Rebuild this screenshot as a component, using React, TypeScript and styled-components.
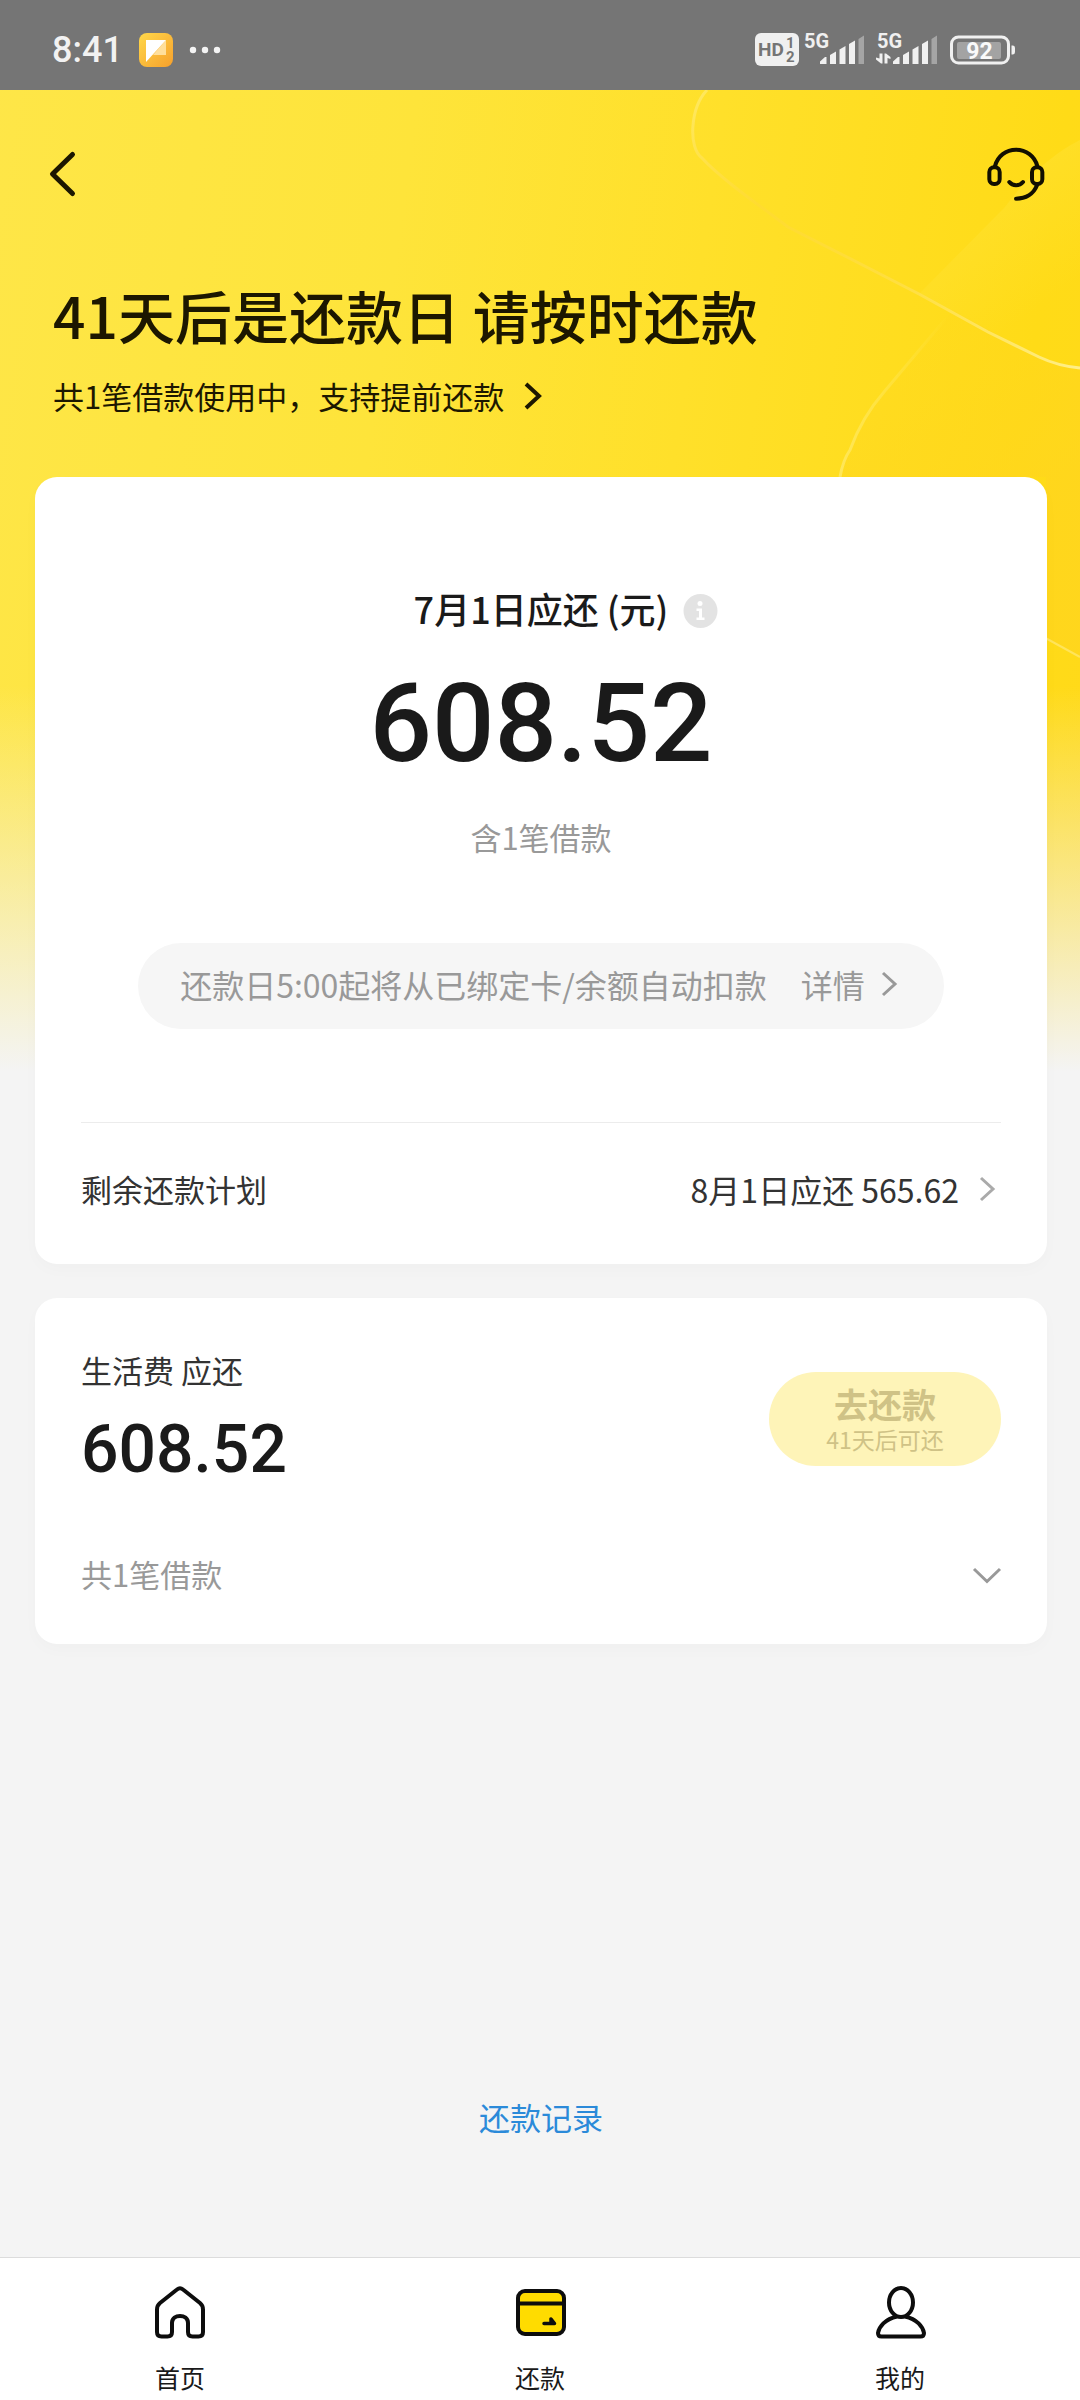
import React from "react";
import styled, { createGlobalStyle } from "styled-components";

const GlobalStyle = createGlobalStyle`
  *, *::before, *::after { box-sizing: border-box; }
  body {
    margin: 0;
    background: #f4f4f4;
    color: #1a1a1a;
    font-family: "Noto Sans CJK SC", "Noto Sans", sans-serif;
    font-size: 31px;
    line-height: 44px;
  }
  h1, h2, p { margin: 0; font-weight: 400; }
  button {
    margin: 0;
    padding: 0;
    border: 0;
    background: none;
    color: inherit;
    font: inherit;
    cursor: pointer;
  }
  a { color: inherit; text-decoration: none; }
  svg { display: block; flex: none; overflow: visible; }
`;

const Page = styled.div`
  position: relative;
  isolation: isolate;
  min-height: 100vh;
  display: flex;
  flex-direction: column;
`;

const Backdrop = styled.div`
  position: absolute;
  inset: 0 0 auto;
  z-index: -1;
  height: 1072px;
  overflow: hidden;
  background:
    linear-gradient(180deg, rgba(244, 244, 244, 0) 64%, #f4f4f4 100%),
    linear-gradient(98deg, #fee648 0%, #fee43a 35%, #ffe02a 60%, #ffdb17 88%, #ffd91a 100%);
`;

const Ribbons = styled.svg`
  position: absolute;
  top: 90px;
  right: 0;
`;

const StatusBar = styled.div`
  display: flex;
  align-items: center;
  justify-content: space-between;
  height: 90px;
  padding: 10px 64px 0 52px;
  background: #757575;
  color: #f2f2f2;
`;

const StatusGroup = styled.div<{ $gap: number }>`
  display: flex;
  align-items: center;
  gap: ${(p) => p.$gap}px;
`;

const Clock = styled.span`
  font-family: Roboto, "Noto Sans CJK SC", sans-serif;
  font-size: 36px;
  font-weight: 500;
`;

const TopBar = styled.header`
  display: flex;
  align-items: center;
  justify-content: space-between;
  height: 168px;
  padding: 0 35px 0 49px;
`;

const Intro = styled.section`
  display: flex;
  flex-direction: column;
  align-items: flex-start;
  gap: 20px;
  padding: 16px 53px 59px;
  color: #1c1700;
`;

const Title = styled.h1`
  font-size: 57px;
  font-weight: 500;
  line-height: 80px;
`;

const PrepayLink = styled.a`
  display: flex;
  align-items: center;
  gap: 20px;
`;

const Main = styled.main`
  flex: 1;
  display: flex;
  flex-direction: column;
  gap: 34px;
  padding: 0 33px 118px 35px;
`;

const Card = styled.section`
  display: flex;
  flex-direction: column;
  border-radius: 22px;
  background: #fff;
  box-shadow: 0 6px 16px rgba(0, 0, 0, 0.02);
`;

const DueCard = styled(Card)`
  padding: 105px 46px 10px;
`;

const LoanCard = styled(Card)`
  padding: 50px 46px 48px;
`;

const DueHeading = styled.div`
  display: grid;
  grid-template-columns: 1fr auto 1fr;
  align-items: center;
  column-gap: 16px;
`;

const DueLabel = styled.h2`
  grid-column: 2;
  font-size: 36px;
  font-weight: 500;
  line-height: 52px;
`;

const Amount = styled.p<{ $size: number; $line: number }>`
  font-family: Roboto, "Noto Sans CJK SC", sans-serif;
  font-size: ${(p) => p.$size}px;
  font-weight: 500;
  line-height: ${(p) => p.$line}px;
`;

const DueBody = styled.div`
  display: flex;
  flex-direction: column;
  align-items: center;
  padding: 34px 0 93px;
`;

const Muted = styled.p`
  color: #999;
`;

const DueNote = styled(Muted)`
  margin: 35px 0 84px;
`;

const Notice = styled.a`
  display: flex;
  align-items: center;
  height: 86px;
  padding: 0 46px 4px 42px;
  border-radius: 43px;
  background: #f6f6f6;
  color: #999;
  font-size: 32px;
`;

const NoticeMore = styled.span`
  display: flex;
  align-items: center;
  gap: 16px;
  margin-left: 34px;
`;

const PlanRow = styled.a`
  display: flex;
  align-items: center;
  justify-content: space-between;
  height: 132px;
  border-top: 1px solid #ececec;
  color: #333;
`;

const PlanValue = styled.span`
  display: flex;
  align-items: center;
  gap: 20px;
  padding-right: 5px;
  font-size: 32px;
`;

const LoanTop = styled.div`
  display: flex;
  align-items: center;
  justify-content: space-between;
`;

const LoanInfo = styled.div`
  display: flex;
  flex-direction: column;
  gap: 18px;
  color: #1a1a1a;
`;

const LoanName = styled.h2`
  color: #333;
  font-size: 31px;
  line-height: 44px;
`;

const RepayButton = styled.button`
  display: flex;
  flex-direction: column;
  align-items: center;
  justify-content: center;
  width: 232px;
  height: 94px;
  border-radius: 47px;
  background: #fef4b8;
  color: #cfc286;
  cursor: default;
`;

const RepayText = styled.span`
  font-size: 34px;
  font-weight: 700;
  line-height: 40px;
`;

const RepayHint = styled.span`
  font-size: 23px;
  line-height: 30px;
`;

const LoanToggle = styled.button`
  display: flex;
  align-items: center;
  justify-content: space-between;
  margin-top: 62px;
  color: #999;
`;

const RecordLink = styled.a`
  align-self: center;
  margin-top: auto;
  color: #2b8ad9;
`;

const TabBar = styled.nav`
  display: grid;
  grid-template-columns: repeat(3, 1fr);
  height: 143px;
  border-top: 1px solid #dcdcdc;
  background: #fff;
`;

const Tab = styled.a`
  display: flex;
  flex-direction: column;
  align-items: center;
  gap: 20px;
  padding-top: 27px;
  font-size: 25px;
  line-height: 36px;
`;

const Chevron = ({ color, width, height, stroke }: { color: string; width: number; height: number; stroke: number }) => (
  <svg width={width} height={height} viewBox={`0 0 ${width} ${height}`} fill="none" stroke={color} strokeWidth={stroke} aria-hidden="true">
    <path d={`M2 2 L${width - 3} ${height / 2} L2 ${height - 2}`} />
  </svg>
);

const AppBadge = () => (
  <svg width="34" height="34" viewBox="0 0 34 34" aria-hidden="true">
    <defs>
      <linearGradient id="badge" x1="0" y1="0" x2="1" y2="1">
        <stop offset="0" stopColor="#ffd84a" />
        <stop offset="1" stopColor="#f6a02c" />
      </linearGradient>
    </defs>
    <rect width="34" height="34" rx="8" fill="url(#badge)" />
    <path d="M27 7V22H14L27 7Z" fill="#ffdf9c" />
    <path d="M7 7H27L7 29Z" fill="#fff" />
  </svg>
);

const Dots = () => (
  <svg width="32" height="8" viewBox="0 0 32 8" fill="#f4f4f4" aria-hidden="true">
    <circle cx="4" cy="4" r="3.2" />
    <circle cx="16" cy="4" r="3.2" />
    <circle cx="28" cy="4" r="3.2" />
  </svg>
);

const SmallText = styled.text`
  font-family: Roboto, "Noto Sans CJK SC", sans-serif;
  font-weight: 700;
`;

const HdBadge = () => (
  <svg width="44" height="34" viewBox="0 0 44 34">
    <rect width="44" height="33" rx="6" fill="#f0f0f0" />
    <SmallText x="3" y="23" fontSize="19" fill="#757575">HD</SmallText>
    <SmallText x="31" y="15" fontSize="15" fill="#757575">1</SmallText>
    <SmallText x="31" y="29" fontSize="15" fill="#757575">2</SmallText>
  </svg>
);

const Signal = ({ transfer }: { transfer?: boolean }) => (
  <svg width="61" height="34" viewBox="0 0 61 34" fill="#f0f0f0">
    <SmallText x="0" y="15" fontSize="20">5G</SmallText>
    {transfer && (
      <path d="M-1 24.500L2.500 25.500V20.500H5.500V30.500H4L-1 26.500ZM7.500 20.500H9L13.500 24V26L10.500 25V30.500H7.500Z" />
    )}
    <path d="M16 31V28.5L21 24H22.5V31Z" />
    <path d="M26 31V22L32 18.5V31Z" />
    <path d="M35.5 31V16.5L41.5 13V31Z" />
    <path d="M45 31V11L51 7.5V31Z" />
    <path d="M54.500 31V6L60 2.500V31Z" fill="#a5a5a5" />
  </svg>
);

const Battery = () => (
  <svg width="66" height="30" viewBox="0 0 66 30">
    <rect x="1.500" y="2" width="57" height="26" rx="7" fill="none" stroke="#f0f0f0" strokeWidth="3" />
    <rect x="7" y="7" width="44" height="17" rx="2" fill="#a3a3a3" />
    <path d="M61.500 10.500H63A2.500 2.500 0 0 1 65 13V17A2.500 2.500 0 0 1 63 19.500H61.500Z" fill="#f0f0f0" />
    <SmallText x="29.500" y="23.500" fontSize="23" textAnchor="middle" fill="#fafafa">92</SmallText>
  </svg>
);

const BackIcon = () => (
  <svg width="28" height="46" viewBox="0 0 28 46" fill="none" stroke="#1c1700" strokeWidth="5" strokeLinecap="round" strokeLinejoin="round" aria-hidden="true">
    <path d="M23.500 3.500L3.500 23L23.500 42.500" />
  </svg>
);

const HeadsetIcon = () => (
  <svg width="58" height="54" viewBox="800 441 174 162" fill="none" stroke="#120f00" strokeWidth="12" strokeLinecap="round" aria-hidden="true">
    <path d="M824 498C832 468 857 449 887 449C917 449 943 468 951 498" />
    <rect x="807" y="502" width="31" height="50" rx="14" />
    <rect x="935" y="502" width="31" height="50" rx="14" />
    <path d="M867 546C877 559 897 559 908 546" />
    <path d="M950 556C940 582 916 596 887 596" />
  </svg>
);

const InfoIcon = () => (
  <svg width="34" height="40" viewBox="0 0 34 40" fill="#fff" aria-hidden="true">
    <circle cx="16.500" cy="23" r="17" fill="#e3e3e3" />
    <circle cx="16" cy="15.500" r="2.500" />
    <path d="M12.500 20.500H18V29.500H20.500V32H12.500V29.500H15V23H12.500Z" />
  </svg>
);

const DownIcon = () => (
  <svg width="28" height="18" viewBox="0 0 28 18" fill="none" stroke="#999" strokeWidth="3" aria-hidden="true">
    <path d="M1 4L14 16.500L27 4" />
  </svg>
);

const HomeIcon = () => (
  <svg width="52" height="54" viewBox="0 0 52 54" fill="none" stroke="#0d0d0d" strokeWidth="4" strokeLinejoin="round" aria-hidden="true">
    <path d="M23 4.500Q26 2 29 4.500L46 18Q49 20.500 49 24.500V47Q49 51.500 44.500 51.500H38.500Q34 51.500 34 47V38C34 28.500 18 28.500 18 38V47Q18 51.500 13.500 51.500H7.500Q3 51.500 3 47V24.500Q3 20.500 6 18Z" />
  </svg>
);

const CardIcon = () => (
  <svg width="52" height="54" viewBox="-1 0 52 54" fill="none" stroke="#0d0d0d" strokeWidth="4" strokeLinecap="round" strokeLinejoin="round" aria-hidden="true">
    <rect x="3" y="6" width="46" height="43" rx="7" fill="#ffdc00" />
    <path d="M4 18.500H48" />
    <path d="M29 38.500H39.500L36 34V38.500" strokeWidth="3.500" />
  </svg>
);

const PersonIcon = () => (
  <svg width="52" height="54" viewBox="-1 0 52 54" fill="none" stroke="#0d0d0d" strokeWidth="4" strokeLinejoin="round" aria-hidden="true">
    <ellipse cx="26" cy="17.500" rx="12" ry="14.500" />
    <path d="M22 31.500C10 34 4 42 3 48Q3 51.500 6.500 51.500H45.500Q49 51.500 49 48C48 42 42 34 30 31.500" />
  </svg>
);

const tabs = [
  { label: "首页", Icon: HomeIcon },
  { label: "还款", Icon: CardIcon },
  { label: "我的", Icon: PersonIcon },
];

export default function App() {
  return (
    <Page>
      <GlobalStyle />
      <Backdrop>
        <Ribbons width="400" height="640" viewBox="680 90 400 640" fill="none" aria-hidden="true">
          <defs>
            <linearGradient id="upper" gradientUnits="userSpaceOnUse" x1="700" y1="90" x2="1080" y2="370">
              <stop offset="0" stopColor="#ffea6a" stopOpacity="0.8" />
              <stop offset="0.25" stopColor="#ffd63c" stopOpacity="0.4" />
              <stop offset="0.6" stopColor="#ffe050" stopOpacity="0.7" />
              <stop offset="1" stopColor="#ffef8a" />
            </linearGradient>
            <linearGradient id="lower" gradientUnits="userSpaceOnUse" x1="840" y1="480" x2="940" y2="310">
              <stop offset="0" stopColor="#ffec74" stopOpacity="0.7" />
              <stop offset="1" stopColor="#ffec74" stopOpacity="0" />
            </linearGradient>
            <linearGradient id="sheet" gradientUnits="userSpaceOnUse" x1="920" y1="260" x2="1080" y2="480">
              <stop offset="0" stopColor="#ffd41f" stopOpacity="0" />
              <stop offset="1" stopColor="#ffd41f" stopOpacity="0.6" />
            </linearGradient>
            <linearGradient id="glow" gradientUnits="userSpaceOnUse" x1="980" y1="200" x2="1050" y2="300">
              <stop offset="0" stopColor="#ffe43c" stopOpacity="0.4" />
              <stop offset="1" stopColor="#ffe43c" stopOpacity="0" />
            </linearGradient>
          </defs>
          <path d="M919 294L1005 207Q1040 160 1080 140V368Q1058 364 1039 357Z" fill="url(#glow)" />
          <path d="M840 477Q843 460 850 450Q862 422 884 392L953 310L1039 357Q1058 366 1080 368V657L1046 638V477Z" fill="url(#sheet)" />
          <path d="M707 90C690 108 688 148 702 158C720 178 760 206 788 227L843 255L919 294L988 332L1039 357Q1058 366 1080 368" stroke="url(#upper)" strokeWidth="3" />
          <path d="M840 477Q843 460 850 450C858 428 870 408 884 392L953 310" stroke="url(#lower)" strokeWidth="3" />
          <path d="M1040 635L1080 657" stroke="#ffe45a" strokeWidth="2" />
        </Ribbons>
      </Backdrop>

      <StatusBar>
        <StatusGroup $gap={16}>
          <Clock>8:41</Clock>
          <AppBadge />
          <Dots />
        </StatusGroup>
        <StatusGroup $gap={5}>
          <HdBadge />
          <StatusGroup $gap={12}>
            <Signal />
            <Signal transfer />
            <Battery />
          </StatusGroup>
        </StatusGroup>
      </StatusBar>

      <TopBar>
        <button type="button" aria-label="返回"><BackIcon /></button>
        <button type="button" aria-label="客服"><HeadsetIcon /></button>
      </TopBar>

      <Intro>
        <Title>41天后是还款日 请按时还款</Title>
        <PrepayLink href="#prepay">
          共1笔借款使用中，支持提前还款
          <Chevron color="#1c1700" width={18} height={28} stroke={4} />
        </PrepayLink>
      </Intro>

      <Main>
        <DueCard>
          <DueHeading>
            <DueLabel>7月1日应还 (元)</DueLabel>
            <InfoIcon />
          </DueHeading>
          <DueBody>
            <Amount $size={110} $line={112}>608.52</Amount>
            <DueNote>含1笔借款</DueNote>
            <Notice href="#autopay">
              <span>还款日5:00起将从已绑定卡/余额自动扣款</span>
              <NoticeMore>
                详情
                <Chevron color="#999" width={17} height={26} stroke={3} />
              </NoticeMore>
            </Notice>
          </DueBody>
          <PlanRow href="#plan">
            <span>剩余还款计划</span>
            <PlanValue>
              8月1日应还 565.62
              <Chevron color="#aaa" width={17} height={26} stroke={3} />
            </PlanValue>
          </PlanRow>
        </DueCard>

        <LoanCard>
          <LoanTop>
            <LoanInfo>
              <LoanName>生活费 应还</LoanName>
              <Amount $size={66} $line={80}>608.52</Amount>
            </LoanInfo>
            <RepayButton type="button">
              <RepayText>去还款</RepayText>
              <RepayHint>41天后可还</RepayHint>
            </RepayButton>
          </LoanTop>
          <LoanToggle type="button">
            <span>共1笔借款</span>
            <DownIcon />
          </LoanToggle>
        </LoanCard>

        <RecordLink href="#records">还款记录</RecordLink>
      </Main>

      <TabBar>
        {tabs.map(({ label, Icon }) => (
          <Tab key={label} href="#">
            <Icon />
            {label}
          </Tab>
        ))}
      </TabBar>
    </Page>
  );
}
